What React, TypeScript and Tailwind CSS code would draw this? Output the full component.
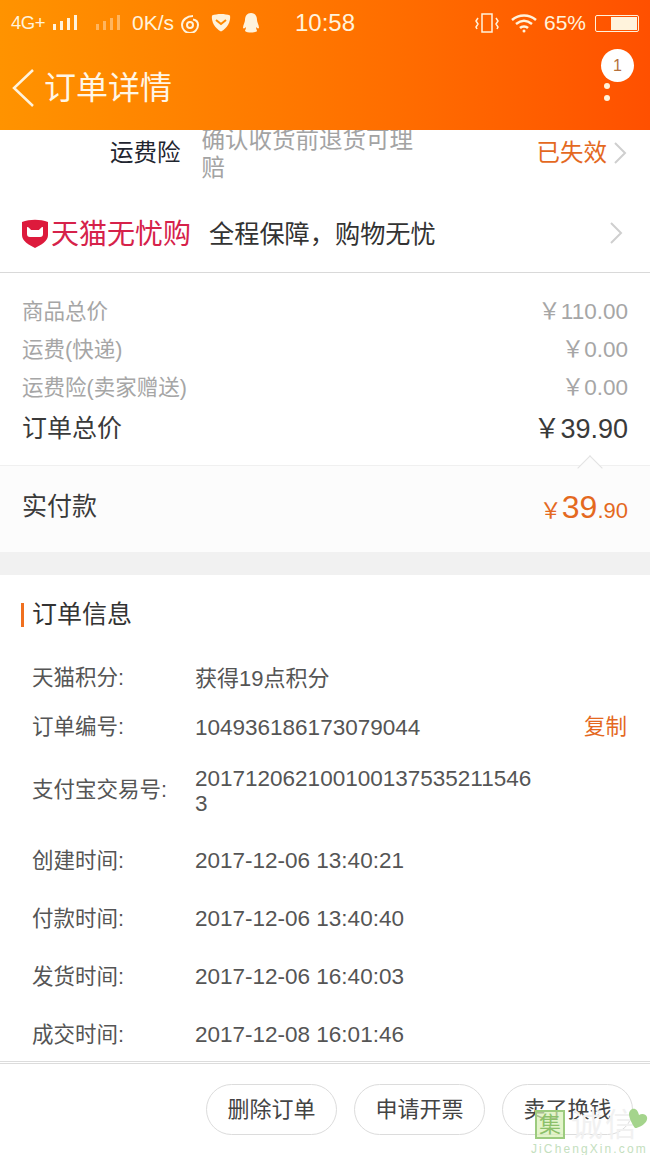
import React from "react";

const cjk = "font-['Liberation_Sans','Noto_Sans_CJK_SC',sans-serif]";

const priceRows = [
  { label: "商品总价", value: "￥110.00" },
  { label: "运费(快递)", value: "￥0.00" },
  { label: "运费险(卖家赠送)", value: "￥0.00" },
];

const infoRows = [
  { label: "创建时间:", value: "2017-12-06 13:40:21" },
  { label: "付款时间:", value: "2017-12-06 13:40:40" },
  { label: "发货时间:", value: "2017-12-06 16:40:03" },
  { label: "成交时间:", value: "2017-12-08 16:01:46" },
];

const Chevron = () => (
  <svg width="14" height="24" viewBox="0 0 14 24" fill="none" stroke="#cfcfcf" strokeWidth="2">
    <path d="M2 2l10 10L2 22" />
  </svg>
);

const StatusBar = () => (
  <div className="h-[46px] flex items-center pl-[11px] text-[#fff3dc]">
    <span className="text-[18.5px] tracking-[-0.5px] w-[39px]">4G+</span>
    <svg width="26" height="20" viewBox="0 0 26 20" fill="#fff3dc" className="ml-[3px]">
      <rect x="0" y="11" width="3" height="6" />
      <rect x="7" y="8" width="3" height="9" />
      <rect x="14" y="5" width="3" height="12" />
      <rect x="21" y="2" width="3" height="15" />
    </svg>
    <svg width="26" height="20" viewBox="0 0 26 20" fill="#ffb55e" className="ml-[17px]">
      <rect x="0" y="11" width="3" height="6" />
      <rect x="7" y="8" width="3" height="9" />
      <rect x="14" y="5" width="3" height="12" />
      <rect x="21" y="2" width="3" height="15" />
    </svg>
    <span className="text-[21px] ml-[10px] w-[48px] whitespace-nowrap">0K/s</span>
    <svg width="20" height="20" viewBox="0 0 20 20" fill="none" stroke="#fff3dc" strokeWidth="2">
      <circle cx="10" cy="12" r="3" />
      <path d="M13 3C7 3 2 7 2 12a8 8 0 0 0 16 0c0-3-2-5-5-5.500" />
    </svg>
    <svg width="22" height="20" viewBox="0 0 22 20" className="ml-[10px]">
      <path d="M2 2.500C7 0.500 15 0.500 20 2.500c1 6-3 13-9 16C5 15.500 1 8.500 2 2.500z" fill="#fff3dc" />
      <path d="M6 7l5 4 5-4" stroke="#ff8a00" strokeWidth="2" fill="none" />
    </svg>
    <svg width="18" height="22" viewBox="0 0 18 22" fill="#fff3dc" className="ml-[10px]">
      <path d="M9 1c4 0 6 3 6 7 0 2 2 5 2 8-1 1-2 0-3-1 0 2 1 3 1 4-1 2-10 2-12 0 0-1 1-2 1-4-1 1-2 2-3 1 0-3 2-6 2-8 0-4 2-7 6-7z" />
    </svg>
    <span className="text-[24px] ml-[35px] w-[180px]">10:58</span>
    <svg width="24" height="22" viewBox="0 0 24 22" fill="none" stroke="#fff3dc" strokeWidth="1.500">
      <rect x="7" y="2" width="10" height="18" />
      <path d="M3 6L1 9l2 3-2 3 1 2M21 6l2 3-2 3 2 3-1 2" />
    </svg>
    <svg width="28" height="22" viewBox="0 0 28 22" fill="none" stroke="#fff3dc" strokeWidth="2.500" className="ml-[11px]">
      <path d="M2 8c7-6 17-6 24 0M6 12c5-4 11-4 16 0M10 16c2-2 6-2 8 0" />
      <circle cx="14" cy="19" r="1.500" fill="#fff3dc" stroke="none" />
    </svg>
    <span className="text-[21px] ml-[6px] w-[51px]">65%</span>
    <div className="w-[44px] h-[17px] border border-[#fff3dc] rounded-[2px] flex justify-end p-[1px]">
      <div className="w-[26px] bg-[#fff3dc]" />
    </div>
  </div>
);

const Watermark = () => (
  <div className="absolute left-[531px] top-[1108px] w-[119px] h-[47px]">
    <div className="absolute left-[4px] top-[2px] w-[30px] h-[29px] border-2 border-[#9ccb7e] bg-[#d7f0b4]/70 flex items-center justify-center text-[22px] leading-none text-[#8cc06a]">
      集
    </div>
    <div className="absolute left-[40px] top-[1px] text-[32px] leading-none text-[#f1f1f1] tracking-[2px]">诚信</div>
    <svg width="24" height="26" viewBox="0 0 24 26" className="absolute left-[95px] top-0">
      <path d="M6 1c4-1 6 2 7 6 3-2 7-1 8 2 1 4-3 8-8 10-2 1-3 1-4 1C6 16 3 10 3 6c0-2 1-4 3-5z" fill="#a4d48c" />
    </svg>
    <div className="absolute left-0 top-[35px] text-[12px] leading-none tracking-[2.1px] text-[#c4e0be] whitespace-nowrap">
      JiChengXin.com
    </div>
  </div>
);

export default function App() {
  return (
    <div className={`${cjk} relative w-[650px] h-[1155px] overflow-hidden bg-white`}>
      <header className="h-[130px] bg-gradient-to-r from-[#ff9300] to-[#ff5000] relative z-10">
        <StatusBar />
        <div className="flex items-center h-[84px] pl-[12px] pb-[1px]">
          <svg width="24" height="40" viewBox="0 0 24 40" fill="none" stroke="#fff3dc" strokeWidth="2.500">
            <path d="M21 2L2 20l19 18" />
          </svg>
          <span className="ml-[8px] text-[32px] text-[#fff6e6]">订单详情</span>
        </div>
        <div className="absolute left-[601px] top-[49px] w-[33px] h-[33px] rounded-full bg-white flex items-center justify-center text-[16px] text-[#b5703c]">
          1
        </div>
        <div className="absolute left-[604px] top-[83px] w-[6px] h-[6px] rounded-full bg-[#fff3dc]" />
        <div className="absolute left-[604px] top-[95px] w-[6px] h-[6px] rounded-full bg-[#fff3dc]" />
      </header>

      <div className="h-[70px] overflow-hidden flex relative pr-[23px]">
        <span className="ml-[110px] mt-[7px] text-[23.500px] leading-[32px] text-[#1f2530]">运费险</span>
        <p className="ml-[21px] -mt-[4px] w-[222px] text-[23.500px] leading-[28px] text-[#a3a3a3]">确认收货前退货可理赔</p>
        <span className="ml-auto mt-[7px] text-[23.500px] leading-[32px] text-[#e4691f]">已失效</span>
        <span className="ml-[6px] mt-[11px]"><Chevron /></span>
      </div>

      <div className="h-[73px] border-b border-[#d9d9d9] flex items-center pl-[22px] pr-[27px] pb-[3px]">
        <svg width="26" height="29" viewBox="0 0 26 29" className="-translate-y-[1px]">
          <path d="M0 3c8-3 18-3 26 0v13c0 6-7 10-13 13C7 26 0 22 0 16z" fill="#dd1a3c" />
          <path d="M5 8c2 0 3 2 4 3h8c1-1 2-3 4-3v7c0 2-1 3-3 3H8c-2 0-3-1-3-3z" fill="#fff" />
        </svg>
        <span className="ml-[3px] text-[28px] leading-none text-[#d6224a]">天猫无忧购</span>
        <span className="ml-[18px] text-[25.200px] text-[#333]">全程保障，购物无忧</span>
        <span className="ml-auto mb-[3px]"><Chevron /></span>
      </div>

      <div className="h-[192px] flex flex-col px-[22px] pt-[20px]">
        {priceRows.map((row) => (
          <div key={row.label} className="h-[38px] flex justify-between items-center text-[21.500px] text-[#a6a6a6]">
            <span>{row.label}</span>
            <span className="text-[22.500px]">{row.value}</span>
          </div>
        ))}
        <div className="h-[44px] flex justify-between items-center text-[25px] text-[#3a3a3a]">
          <span>订单总价</span>
          <span className="text-[27px]">￥39.90</span>
        </div>
      </div>

      <div className="relative h-[87px] bg-[#fcfcfc] border-t border-[#f0f0f0] flex justify-between items-center px-[22px] pb-[5px]">
        <span className="text-[25px] text-[#3a3a3a]">实付款</span>
        <span className="flex items-baseline text-[#e4691f]">
          <span className="text-[22px]">￥</span>
          <span className="text-[32px]">39</span>
          <span className="text-[22px]">.90</span>
        </span>
        <div className="absolute left-[581px] -top-[7px] w-[18px] h-[18px] rotate-45 border-l border-t border-[#e2e2e2] bg-[#fcfcfc]" />
      </div>

      <div className="h-[23px] bg-[#f1f1f1]" />

      <section className="relative">
        <div className="flex items-center h-[79px] pl-[21px]">
          <div className="w-[3px] h-[24px] bg-[#f0701f]" />
          <span className="ml-[8px] text-[25px] text-[#333]">订单信息</span>
        </div>
        <div className="px-[32px] text-[21.500px] text-[#555]">
          <div className="h-[49px] flex items-center">
            <span className="w-[163px]">天猫积分:</span>
            <span className="text-[22px]">获得19点积分</span>
          </div>
          <div className="h-[49px] flex items-center">
            <span className="w-[163px]">订单编号:</span>
            <span className="flex-1 text-[22.500px]">104936186173079044</span>
            <span className="mr-[-9px] text-[#e4691f]">复制</span>
          </div>
          <div className="h-[80px] flex items-center pb-[3px]">
            <span className="w-[163px]">支付宝交易号:</span>
            <span className="w-[340px] text-[22.500px] leading-[25px] break-all">2017120621001001375352115463</span>
          </div>
          {infoRows.map((row) => (
            <div key={row.label} className="h-[58px] flex items-center">
              <span className="w-[163px]">{row.label}</span>
              <span className="text-[22.500px]">{row.value}</span>
            </div>
          ))}
        </div>
      </section>

      <footer className="absolute left-0 right-0 top-[1061px] h-[94px] bg-white border-t-[3px] border-double border-[#dcdcdc] flex justify-end gap-[17px] pt-[20px] pr-[17px]">
        {["删除订单", "申请开票", "卖了换钱"].map((label) => (
          <button key={label} className="w-[131px] h-[51px] rounded-full border border-[#dcdcdc] text-[22px] text-[#444]">
            {label}
          </button>
        ))}
      </footer>

      <Watermark />
    </div>
  );
}
